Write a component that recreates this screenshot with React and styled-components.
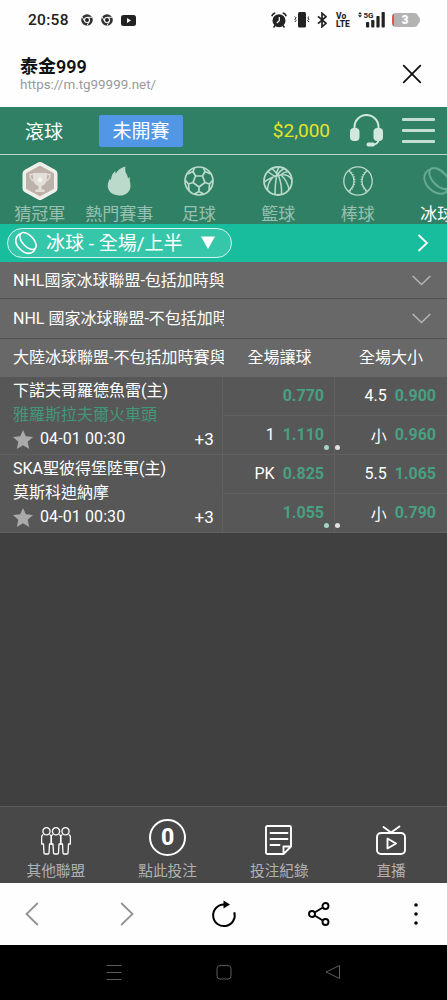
import { useState } from 'react';
import styled, { createGlobalStyle } from 'styled-components';

const sports = [
  { id: 'champion', label: '猜冠軍' },
  { id: 'hot', label: '熱門賽事' },
  { id: 'soccer', label: '足球' },
  { id: 'basketball', label: '籃球' },
  { id: 'baseball', label: '棒球' },
  { id: 'hockey', label: '冰球' },
];

const matches = [
  {
    home: '下諾夫哥羅德魚雷(主)',
    away: '雅羅斯拉夫爾火車頭',
    awayStrong: true,
    time: '04-01 00:30',
    odds: [
      ['', '0.770'],
      ['4.5', '0.900'],
      ['1', '1.110'],
      ['小', '0.960'],
    ],
  },
  {
    home: 'SKA聖彼得堡陸軍(主)',
    away: '莫斯科迪納摩',
    awayStrong: false,
    time: '04-01 00:30',
    odds: [
      ['PK', '0.825'],
      ['5.5', '1.065'],
      ['', '1.055'],
      ['小', '0.790'],
    ],
  },
];

export default function App() {
  const [activeSport, setActiveSport] = useState('hockey');

  return (
    <>
      <GlobalStyle />
      <Screen>
        <StatusBar />

        <BrowserHeader>
          <div>
            <PageTitle>泰金999</PageTitle>
            <PageUrl>https://m.tg99999.net/</PageUrl>
          </div>
          <svg width="20" height="20" viewBox="0 0 20 20" stroke="#111" strokeWidth="1.8" strokeLinecap="round">
            <path d="M1.7 1.7 18.3 18.3M18.3 1.7 1.7 18.3" />
          </svg>
        </BrowserHeader>

        <TopBar>
          <LiveTab>滾球</LiveTab>
          <UpcomingTab>未開賽</UpcomingTab>
          <Balance>$2,000</Balance>
          <HeadsetIcon />
          <MenuIcon>
            <i />
            <i />
            <i />
          </MenuIcon>
        </TopBar>

        <SportNav>
          {sports.map((sport) => (
            <SportItem key={sport.id} $active={activeSport === sport.id} onClick={() => setActiveSport(sport.id)}>
              <IconBox>
                <SportIcon id={sport.id} />
              </IconBox>
              <span>{sport.label}</span>
            </SportItem>
          ))}
        </SportNav>

        <FilterBar>
          <FilterPill>
            <svg width="24" height="24" viewBox="0 0 24 24">
              <Puck />
            </svg>
            <span>冰球 - 全場/上半</span>
            <svg width="14" height="14" viewBox="0 0 14 14" fill="#fff">
              <path d="M0 .5h14L7 13z" />
            </svg>
          </FilterPill>
          <svg width="12" height="18" viewBox="0 0 12 18" fill="none" stroke="#fff" strokeWidth="1.8">
            <path d="M1.5 1 10 9l-8.5 8" />
          </svg>
        </FilterBar>

        <LeagueRow $height={37}>
          <LeagueName>NHL國家冰球聯盟-包括加時與</LeagueName>
          <ChevronDown />
        </LeagueRow>
        <LeagueRow $height={40}>
          <LeagueName>NHL 國家冰球聯盟-不包括加時</LeagueName>
          <ChevronDown />
        </LeagueRow>
        <LeagueHead>
          <LeagueName>大陸冰球聯盟-不包括加時賽與</LeagueName>
          <MarketTitle>全場讓球</MarketTitle>
          <MarketTitle>全場大小</MarketTitle>
        </LeagueHead>

        {matches.map((match) => (
          <Match key={match.home}>
            <MatchInfo>
              <Team>{match.home}</Team>
              <Team $strong={match.awayStrong}>{match.away}</Team>
              <MatchMeta>
                <svg width="20" height="19" viewBox="0 0 20 19" fill="#aaa">
                  <path d="m10 0 2.8 6.3 7.2.7-5.3 4.7 1.5 7.2L10 15.3 3.8 18.9l1.5-7.2L0 7l7.2-.7z" />
                </svg>
                <span>{match.time}</span>
                <More>+3</More>
              </MatchMeta>
            </MatchInfo>
            <OddsGrid>
              {match.odds.map(([line, price], i) => (
                <Odds key={i}>
                  <span>{line}</span>
                  <b>{price}</b>
                </Odds>
              ))}
              <PageDots>
                <Dot $active />
                <Dot />
              </PageDots>
            </OddsGrid>
          </Match>
        ))}

        <Spacer />

        <BottomNav>
          <BottomItem>
            <PeopleIcon />
            <span>其他聯盟</span>
          </BottomItem>
          <BottomItem>
            <BetCount>0</BetCount>
            <span>點此投注</span>
          </BottomItem>
          <BottomItem>
            <svg width="28" height="30" viewBox="0 0 28 30" fill="none" stroke="#fff" strokeWidth="1.9" strokeLinejoin="round" strokeLinecap="round">
              <path d="M2.5 1h22q1.5 0 1.5 1.5v19L18.5 29h-16Q1 29 1 27.5v-25Q1 1 2.5 1zM18.5 29v-7.5H26M5.500 8h17M5.500 14h17M5.500 20h9" />
            </svg>
            <span>投注紀錄</span>
          </BottomItem>
          <BottomItem>
            <svg width="30" height="30" viewBox="0 0 30 30" fill="none" stroke="#fff" strokeWidth="1.9" strokeLinejoin="round" strokeLinecap="round">
              <rect x="1" y="8" width="28" height="21" rx="4" />
              <path d="M7.5 2 15 7.5l8.5-6M11.500 13.500v10l8.500-5z" />
            </svg>
            <span>直播</span>
          </BottomItem>
        </BottomNav>

        <BrowserBar />
        <SystemBar />
      </Screen>
    </>
  );
}

function StatusBar() {
  return (
    <Status>
      <Clock>20:58</Clock>
      <ChromeIcon />
      <ChromeIcon />
      <svg width="15" height="11" viewBox="0 0 15 11">
        <rect width="15" height="11" rx="2.5" fill="#222" />
        <path d="M6 3v5l4-2.5z" fill="#fff" />
      </svg>
      <StatusRight>
        <svg width="16" height="16" viewBox="0 0 16 16">
          <circle cx="8" cy="8.7" r="6.5" fill="#222" />
          <path d="M.8 4.300Q1.500 1.500 4.300 1M15.200 4.300Q14.500 1.500 11.700 1M4 13.500l-1.500 2M12 13.500l1.500 2" fill="none" stroke="#222" strokeWidth="1.5" />
          <path d="M8.300 5v3.700L5.800 11" fill="none" stroke="#fff" strokeWidth="1.2" />
        </svg>
        <svg width="16" height="16" viewBox="0 0 16 16">
          <rect x="4" y="0" width="8" height="15.5" rx="1.5" fill="#222" />
          <path d="m.8 4.500 1.300 1.300L.8 7.200l1.300 1.300L.8 10M15 4.500l-1.300 1.300L15 7.200l-1.300 1.300L15 10" fill="none" stroke="#222" />
        </svg>
        <svg width="10" height="16" viewBox="0 0 10 16" fill="none" stroke="#222" strokeWidth="1.7">
          <path d="m1 4.300 8 7-4 3.500V1.200l4 3.500-8 7" />
        </svg>
        <Volte>
          Vo
          <br />
          LTE
        </Volte>
        <svg width="27" height="16" viewBox="0 0 27 16" fill="#222">
          <path d="m2 0 2 2.200H0zM2 5.500l2-2.200H0z" />
          <text x="5.5" y="6" fontFamily="Roboto" fontWeight="700" fontSize="8">
            5G
          </text>
          <rect x="8" y="10" width="3.2" height="5.5" rx=".8" />
          <rect x="13.2" y="8" width="3.2" height="7.5" rx=".8" />
          <rect x="18.4" y="4" width="3.2" height="11.5" rx=".8" />
          <rect x="23.6" y="0" width="3.2" height="15.5" rx=".8" />
        </svg>
        <svg width="28" height="14" viewBox="0 0 28 14">
          <rect width="26" height="14" rx="4" fill="#b3b3b3" />
          <path d="M25 2.500q3 1.500 3 4.500t-3 4.500z" fill="#b3b3b3" />
          <path d="M2 .6Q0 2 0 4v6q0 2 2 3.400z" fill="#e25555" />
          <text x="13" y="11.3" textAnchor="middle" fill="#fff" fontFamily="Roboto" fontWeight="900" fontSize="12">
            3
          </text>
        </svg>
      </StatusRight>
    </Status>
  );
}

function ChromeIcon() {
  return (
    <svg width="12" height="12" viewBox="0 0 12 12">
      <circle cx="6" cy="6" r="5.8" fill="#333" />
      <circle cx="6" cy="6" r="2.5" fill="#222" stroke="#fff" strokeWidth="1.1" />
      <path d="M6 3.300h5M3.700 7.400 1.200 3M8.300 7.400 5.900 11.700" stroke="#fff" strokeWidth=".9" />
    </svg>
  );
}

function HeadsetIcon() {
  return (
    <svg width="33" height="33" viewBox="0 0 33 33" fill="none">
      <path d="M4.500 15v-2a12 12 0 0 1 24 0v2" stroke="#d2e8de" strokeWidth="2" />
      <rect x="0" y="14" width="9.5" height="13" rx="4" fill="#d2e8de" />
      <rect x="23.5" y="14" width="9.5" height="13" rx="4" fill="#d2e8de" />
      <path d="M28.500 26q-.5 4.500-6 4.500" stroke="#d2e8de" strokeWidth="2" />
      <rect x="16.5" y="28.5" width="8.5" height="4" rx="2" fill="#d2e8de" />
    </svg>
  );
}

// tilted disc: top face plus the visible rim below it
function Puck() {
  return (
    <g fill="none" stroke="currentColor" strokeWidth="1.6">
      <ellipse cx="14" cy="10" rx="10.3" ry="5.6" transform="rotate(47 14 10)" />
      <path d="M7 2.500Q4.500 3 3 5.500C.8 9 2 13.700 5.500 17.500c3.600 4 8.500 5.500 12 4.300q2.500-1 3.700-3.800" />
    </g>
  );
}

function SportIcon({ id }) {
  if (id === 'champion') {
    return (
      <svg width="36" height="40" viewBox="0 0 36 40">
        <path d="M16 1.500q2-1.200 4 0l13.500 7.600q2 1.200 2 3.400v15q0 2.200-2 3.400L20 38.500q-2 1.200-4 0L2.500 30.900q-2-1.200-2-3.400v-15q0-2.200 2-3.400z" fill="#f1efec" />
        <path d="m18 4.500 14 7.800v15.400l-14 7.800-14-7.800V12.300z" fill="#bcb2a9" />
        <path d="M11 12h14v5q0 6.500-5.500 8v3.500h3V31h-9v-2.500h3V25Q11 23.500 11 17z" fill="#e4dfd9" />
        <path d="M11 13.500H8q0 5.500 4.500 6.500M25 13.500h3q0 5.500-4.500 6.500" fill="none" stroke="#e0dad4" strokeWidth="1.5" />
        <path d="m18 15.500.9 2 2.100.2-1.600 1.400.5 2.100-1.900-1.200-1.900 1.200.5-2.100-1.600-1.400 2.100-.2z" fill="#fbfaf8" />
      </svg>
    );
  }
  if (id === 'hot') {
    return (
      <svg width="24" height="30" viewBox="0 0 24 30" fill="#bbdacc">
        <path d="M18.500.5Q17.500 5 19.500 8q1.200 1.500 1.500 4.500l2-1.500q-.6 3 .3 6.500C24.500 25 19.500 29.500 12.500 29.500S-.5 25 1 17.500q.6-3 2-5l.8 2q.5-6.500 4.500-9.500l.2 2.800Q12 2 18.500.5z" />
      </svg>
    );
  }
  if (id === 'soccer') {
    return (
      <svg width="30" height="30" viewBox="0 0 30 30" fill="none" stroke="#bbdacc" strokeWidth="1.7" strokeLinejoin="round">
        <circle cx="15" cy="15" r="14" />
        <path d="M11.500 10h7l2.500 6.500-6 4.500-6-4.500zM11.500 10 9 5.500l1.500-3.500M18.500 10 21 5.500 19.500 2M9 5.500 3.500 8M21 5.500 26.500 8M9 16.500l-4.500 1.500-3-3.500M4.500 18 5 24.500M21 16.500l4.500 1.500 3-3.500M25.500 18 25 24.500M15 21v4.500l-4.500 2.500M15 25.500l4.500 2.500" />
      </svg>
    );
  }
  if (id === 'basketball') {
    return (
      <svg width="30" height="30" viewBox="0 0 30 30" fill="none" stroke="#bbdacc" strokeWidth="1.5">
        <circle cx="15" cy="15" r="14" strokeWidth="1.8" />
        <path d="M16 1q-2.500 4-2.500 9-1.500 9-1.500 18.500M15.500 9.500q3.500 9 3 19M18 9q6.500 6 8 14.500M10 11q-5.500 6-5.500 13M1.500 16q8-6 16-7t11 4.500M5 5.500q5 4.500 8.500 5M9 2.500q4 3.500 6 7M25 5.500q-4 .5-7.500 3.500M21 2.500q-4.500 2.500-7 7" />
      </svg>
    );
  }
  if (id === 'baseball') {
    return (
      <svg width="30" height="30" viewBox="0 0 30 30" fill="none" stroke="#bbdacc" strokeWidth="1.3">
        <circle cx="15" cy="15" r="14.2" />
        <path d="M5.500 4.500Q11 9 11 15T5.500 25.500M24.500 4.500Q19 9 19 15t5.500 10.500" />
        <path d="M6.500 4.500Q11.700 9 11.700 15T6.500 25.500M23.500 4.500Q18.300 9 18.300 15t5.200 10.500" strokeWidth="1.5" strokeDasharray="1 1.5" />
      </svg>
    );
  }
  return (
    <svg width="30" height="30" viewBox="0 0 24 24" color="#68aa95">
      <Puck />
    </svg>
  );
}

function ChevronDown() {
  return (
    <svg width="19" height="11" viewBox="0 0 19 11" fill="none" stroke="#b4b4b4" strokeWidth="1.6">
      <path d="m.7 1 8.800 8.500L18.300 1" />
    </svg>
  );
}

function PeopleIcon() {
  return (
    <svg width="30" height="28" viewBox="0 0 30 28" fill="none" stroke="#fff" strokeWidth="1.3" strokeLinejoin="round">
      {[5.5, 15, 24.5].map((x) => (
        <g key={x} transform={`translate(${x} 0)`}>
          <circle cx="0" cy="4.3" r="3.6" />
          <path d="M-3 7.700q-1.900.3-1.900 2.300v7h1.900l.5 9q.1 1 1.100 1h2.800q1 0 1.100-1l.5-9h1.900v-7q0-2-1.900-2.300" />
        </g>
      ))}
    </svg>
  );
}

function BrowserBar() {
  return (
    <BrowserTools>
      <svg width="14" height="24" viewBox="0 0 14 24" fill="none" stroke="#929292" strokeWidth="1.8">
        <path d="M12.800 1 1.500 12l11.300 11" />
      </svg>
      <svg width="14" height="24" viewBox="0 0 14 24" fill="none" stroke="#929292" strokeWidth="1.8">
        <path d="m1.200 1 11.300 11L1.200 23" />
      </svg>
      <svg width="26" height="28" viewBox="0 0 26 28" fill="none" stroke="#000" strokeWidth="2">
        <path d="M13 4.500a10.800 10.800 0 1 0 10.300 7.700" />
        <path d="M12.500.5 19 4.500l-6.500 4z" fill="#000" stroke="none" />
      </svg>
      <svg width="22" height="24" viewBox="0 0 22 24" fill="none" stroke="#000" strokeWidth="1.9">
        <circle cx="4" cy="12" r="3" />
        <circle cx="17.5" cy="4" r="3" />
        <circle cx="17.5" cy="20" r="3" />
        <path d="m6.600 10.500 8.300-5M6.600 13.500l8.300 5" />
      </svg>
      <svg width="4" height="24" viewBox="0 0 4 24">
        <circle cx="2" cy="3" r="1.8" />
        <circle cx="2" cy="12" r="1.8" />
        <circle cx="2" cy="21" r="1.8" />
      </svg>
    </BrowserTools>
  );
}

function SystemBar() {
  return (
    <SystemNav>
      <svg width="16" height="16" viewBox="0 0 16 16" stroke="#5c5c5c">
        <path d="M.5 1.500h15M.5 8.500h15M.5 15.500h15" />
      </svg>
      <svg width="16" height="16" viewBox="0 0 16 16" fill="none" stroke="#5c5c5c">
        <rect x="1" y="1.5" width="14" height="13.5" rx="3" />
      </svg>
      <svg width="16" height="16" viewBox="0 0 16 16" fill="none" stroke="#5c5c5c" strokeLinejoin="round">
        <path d="M14.500 1.500v13L1 8z" />
      </svg>
    </SystemNav>
  );
}

const GlobalStyle = createGlobalStyle`
  * {
    box-sizing: border-box;
  }

  body {
    margin: 0;
    background: #404040;
    font-family: Roboto, 'Noto Sans CJK TC', sans-serif;
  }

  svg {
    display: block;
    flex-shrink: 0;
  }
`;

const Screen = styled.main`
  display: flex;
  flex-direction: column;
  width: 447px;
  height: 1000px;
  overflow: hidden;
  color: #fff;
  background: #404040;
`;

const Status = styled.div`
  display: flex;
  align-items: center;
  flex-shrink: 0;
  gap: 8px;
  height: 40px;
  padding: 0 27px 0 28px;
  background: #fefefe;
`;

const Clock = styled.span`
  width: 45px;
  color: #222;
  font-family: Roboto, sans-serif;
  font-size: 15.5px;
  font-weight: 500;
  letter-spacing: 0.3px;
`;

const StatusRight = styled.div`
  display: flex;
  align-items: center;
  gap: 7px;
  margin-left: auto;
`;

const Volte = styled.span`
  width: 15px;
  margin: 0 0 0 2px;
  color: #222;
  font-size: 8.5px;
  font-weight: 800;
  line-height: 8px;
`;

const BrowserHeader = styled.header`
  display: flex;
  justify-content: space-between;
  align-items: center;
  flex-shrink: 0;
  height: 67px;
  padding: 0 25px 0 20px;
  background: #fefefe;
`;

const PageTitle = styled.div`
  padding-top: 2px;
  color: #111;
  font-size: 18px;
  font-weight: 600;
  line-height: 20px;
`;

const PageUrl = styled.div`
  color: #999;
  font-size: 13.4px;
  line-height: 16px;
`;

const TopBar = styled.div`
  display: flex;
  align-items: center;
  flex-shrink: 0;
  height: 48px;
  padding: 0 12px 0 25px;
  background: #2f8064;
  border-bottom: 1px solid #b9d8ca;
`;

const LiveTab = styled.span`
  width: 74px;
  font-size: 19px;
`;

const UpcomingTab = styled.span`
  width: 84px;
  height: 32px;
  padding-top: 1px;
  border-radius: 2px;
  background: #5297e6;
  font-size: 19px;
  line-height: 32px;
  text-align: center;
`;

const Balance = styled.span`
  margin: 0 20px 0 auto;
  color: #e7e328;
  font-size: 19px;
`;

const MenuIcon = styled.div`
  display: flex;
  flex-direction: column;
  gap: 8px;
  width: 33px;
  margin: 0 0 0 19px;

  i {
    height: 3px;
    border-radius: 1px;
    background: #c5ded3;
  }
`;

const SportNav = styled.nav`
  display: flex;
  flex-shrink: 0;
  height: 69px;
  overflow: hidden;
  background: #2f8064;
`;

const SportItem = styled.div`
  display: flex;
  flex-direction: column;
  align-items: center;
  flex: 0 0 79.5px;
  color: ${({ $active }) => ($active ? '#fff' : '#98c0b0')};
  font-size: 17px;
  line-height: 22px;

  span {
    margin-top: -3px;
    white-space: nowrap;
  }
`;

const IconBox = styled.div`
  display: flex;
  align-items: center;
  flex-shrink: 0;
  height: 51px;
`;

const FilterBar = styled.div`
  display: flex;
  align-items: center;
  justify-content: space-between;
  flex-shrink: 0;
  height: 38px;
  padding: 0 18px 0 7px;
  background: #18bd9e;
`;

const FilterPill = styled.div`
  display: flex;
  align-items: center;
  width: 225px;
  height: 30px;
  padding-left: 6px;
  border: 1px solid #d6f5ee;
  border-radius: 15px;
  background: #36c7ab;
  font-size: 19px;
  line-height: 29px;

  span {
    width: 163px;
    padding-left: 8px;
    white-space: nowrap;
  }
`;

const LeagueRow = styled.div`
  display: flex;
  align-items: center;
  justify-content: space-between;
  flex-shrink: 0;
  height: ${({ $height }) => $height}px;
  padding-right: 16px;
  background: #686868;
  border-bottom: 1px solid #505050;
`;

const LeagueName = styled.div`
  width: 224px;
  padding: 1px 0 0 13px;
  overflow: hidden;
  font-size: 16px;
  line-height: 24px;
  white-space: nowrap;
`;

const LeagueHead = styled.div`
  display: grid;
  grid-template-columns: 224px 111px 112px;
  align-items: center;
  flex-shrink: 0;
  height: 38px;
  padding-bottom: 1px;
  background: #686868;
`;

const MarketTitle = styled.div`
  font-size: 16px;
  line-height: 23px;
  text-align: center;
`;

const Match = styled.section`
  display: grid;
  grid-template-columns: 222px 1fr;
  flex-shrink: 0;
  height: 78px;
  background: #575757;
  border-bottom: 1px solid #616161;
`;

const MatchInfo = styled.div`
  padding: 2px 8px 0 13px;
  font-size: 16px;
  line-height: 24px;
`;

const Team = styled.div`
  height: 23.5px;
  color: ${({ $strong }) => ($strong ? '#43987b' : '#fff')};
  white-space: nowrap;
`;

const MatchMeta = styled.div`
  display: flex;
  align-items: center;
  gap: 7px;
  height: 26px;

  span {
    letter-spacing: 0.1px;
  }
`;

const More = styled.span`
  margin-left: auto;
  font-size: 17px;
`;

const OddsGrid = styled.div`
  position: relative;
  display: grid;
  grid-template-columns: 112px 113px;
  grid-template-rows: 1fr 1fr;
`;

const Odds = styled.div`
  display: flex;
  justify-content: flex-end;
  align-items: center;
  gap: 8px;
  padding-right: 10px;
  border-left: 1px solid #606060;
  font-size: 16px;

  &:nth-child(-n + 2) {
    border-bottom: 1px solid #616161;
  }

  &:nth-child(even) {
    padding-right: 11px;
  }

  b {
    color: #48a082;
    font-weight: 700;
  }
`;

// page indicator that sits over the line between the two markets
const PageDots = styled.div`
  position: absolute;
  bottom: 4px;
  left: 102px;
  display: flex;
  gap: 6px;
`;

const Dot = styled.i`
  width: 5px;
  height: 5px;
  border-radius: 50%;
  background: ${({ $active }) => ($active ? '#a3d5c5' : '#e2e2e2')};
`;

const Spacer = styled.div`
  flex: 1;
`;

const BottomNav = styled.nav`
  display: grid;
  grid-template-columns: repeat(4, 1fr);
  flex-shrink: 0;
  height: 77px;
  background: #484848;
  border-top: 1px solid #5a5a5a;
`;

const BottomItem = styled.div`
  display: flex;
  flex-direction: column;
  align-items: center;
  justify-content: flex-end;
  padding-bottom: 2px;
  color: #b1b1b1;
  font-size: 14.7px;
  line-height: 20px;

  svg {
    margin-bottom: 6px;
  }
`;

const BetCount = styled.div`
  width: 37px;
  height: 37px;
  margin-bottom: 5px;
  border: 2.5px solid #fff;
  border-radius: 50%;
  color: #fff;
  font-size: 23px;
  font-weight: 800;
  line-height: 33px;
  text-align: center;
`;

const BrowserTools = styled.div`
  display: grid;
  grid-template-columns: 95px 91px 97px 106px 4px;
  align-items: center;
  flex-shrink: 0;
  height: 62px;
  padding: 0 0 0 25px;
  background: #fefefe;
`;

const SystemNav = styled.div`
  display: flex;
  align-items: center;
  justify-content: space-between;
  flex-shrink: 0;
  height: 55px;
  padding: 0 106px 1px;
  background: #000;
`;
